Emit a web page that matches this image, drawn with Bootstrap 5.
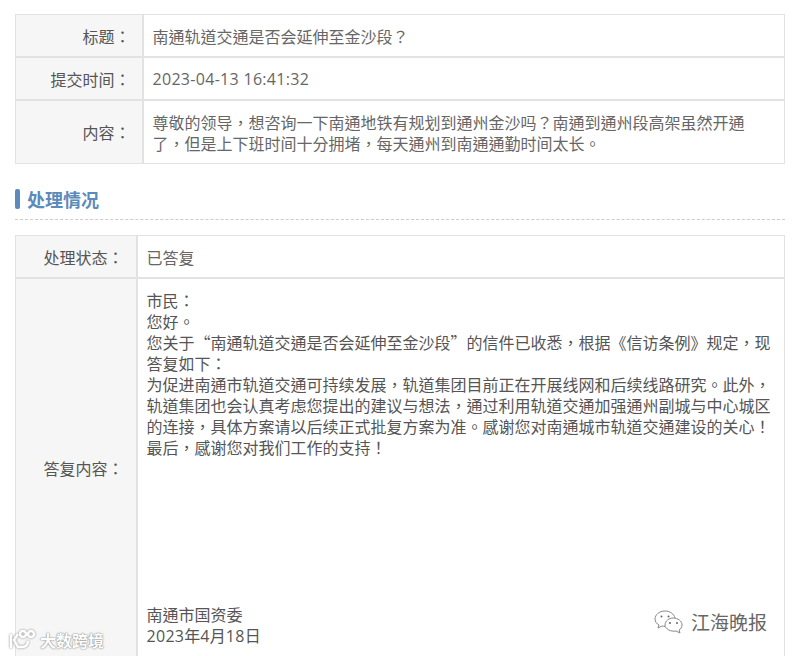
<!DOCTYPE html>
<html lang="zh-Hant">
<head>
<meta charset="utf-8">
<title>处理情况</title>
<link rel="stylesheet" href="https://cdn.jsdelivr.net/npm/bootstrap@5.3.0/dist/css/bootstrap.min.css">
<style>
html,body{height:656px;overflow:hidden;background:#fff}
body{font-family:"Noto Sans CJK TC","Noto Sans CJK SC",sans-serif;font-size:16px;line-height:21px;color:#666;position:relative}
.sheet{padding:14px 7px 0 15px}
.num{font-family:"Open Sans",sans-serif;letter-spacing:.3px}
.info{table-layout:fixed;width:770px;margin:0;border-collapse:collapse;--bs-table-bg:transparent}
.info th,.info td{border:2px solid #e2e2e2;font-weight:400;vertical-align:middle;line-height:21px;padding:0 9px;color:#666}
.info tr:first-child>*{border-top-width:1px}
.info tr:last-child>*{border-bottom-width:1px}
.info th{background:#f6f6f6;text-align:right;color:#555;padding:0 11px 0 0;border-left-width:1px}
.info td{border-right-width:1px;background:#fff}
.one th{width:127px}
.two th{width:121px;padding-right:12px}
.rowfirst{height:42px}
.rowh{height:43px}
.contenth{height:64px}
.info .rowfirst>*,.info .rowh>*,.info .contenth>*{padding-top:2px}
.replyh{height:381px}
.two td.reply{vertical-align:top;padding-top:11px;color:#555}
.gapline{height:146px}
.heading{margin:25px 0 15px;padding-bottom:10px;border-bottom:1px dashed #ccc;display:flex;align-items:center;gap:7px}
.bar-mark{width:5px;height:20px;background:#5b8abb;border-radius:2px;flex:none}
.heading h2{font-size:18px;line-height:20px;font-weight:700;margin:0;color:#5b8abb;font-family:"Noto Sans CJK SC",sans-serif}
.mark-left{position:absolute;left:8px;top:629px;display:flex;align-items:center;gap:4px;color:#fff;font-size:16px;line-height:20px;font-weight:700;text-shadow:0 0 2px #888,0 0 1px #888}
.mark-left svg{filter:drop-shadow(0 0 1px #888)}
.mark-right{position:absolute;left:654px;top:608px;display:flex;align-items:center;gap:7px;color:#666;font-size:19px;line-height:26px;font-family:"Noto Sans CJK SC",sans-serif;text-shadow:0 0 2px #fff}
</style>
</head>
<body>
<div class="sheet">
  <table class="table info one">
    <tbody>
      <tr class="rowfirst"><th>标题：</th><td>南通轨道交通是否会延伸至金沙段？</td></tr>
      <tr class="rowh"><th>提交时间：</th><td><span class="num">2023-04-13 16:41:32</span></td></tr>
      <tr class="contenth"><th>内容：</th><td>尊敬的领导，想咨询一下南通地铁有规划到通州金沙吗？南通到通州段高架虽然开通了，但是上下班时间十分拥堵，每天通州到南通通勤时间太长。</td></tr>
    </tbody>
  </table>
  <div class="heading"><span class="bar-mark"></span><h2>处理情况</h2></div>
  <table class="table info two">
    <tbody>
      <tr class="rowfirst"><th>处理状态：</th><td>已答复</td></tr>
      <tr class="replyh"><th>答复内容：</th><td class="reply">
        <div>市民：</div>
        <div>您好。</div>
        <div>您关于“南通轨道交通是否会延伸至金沙段”的信件已收悉，根据《信访条例》规定，现答复如下：</div>
        <div>为促进南通市轨道交通可持续发展，轨道集团目前正在开展线网和后续线路研究。此外，轨道集团也会认真考虑您提出的建议与想法，通过利用轨道交通加强通州副城与中心城区的连接，具体方案请以后续正式批复方案为准。感谢您对南通城市轨道交通建设的关心！</div>
        <div>最后，感谢您对我们工作的支持！</div>
        <div class="gapline"></div>
        <div>南通市国资委</div>
        <div><span class="num">2023</span>年<span class="num">4</span>月<span class="num">18</span>日</div>
      </td></tr>
    </tbody>
  </table>
</div>
<div class="mark-left">
  <svg width="28" height="22" viewBox="0 0 28 22" fill="none" stroke="#fff" stroke-width="2.500"><path d="M3 5v14M10 5 6 11l4 7h4c4 0 6-3 6-6"/><circle cx="15" cy="5" r="3"/><circle cx="23" cy="5" r="3"/></svg>
  <span>大数跨境</span>
</div>
<div class="mark-right">
  <svg width="30" height="28" viewBox="0 0 30 28" fill="none" stroke="#888" stroke-width="1"><path d="M11 3C5 3 1 7 1 11c0 3 2 5 4 6l-1 3 4-2c1 0 2 .5 3 .5"/><path d="M11 3c5 0 9 3 10 7"/><circle cx="7.500" cy="8.500" r="1" fill="#666" stroke="none"/><circle cx="14.500" cy="8.500" r="1" fill="#666" stroke="none"/><path d="M19 10c5 0 9 3 9 7 0 2-1 4-3 5l1 3-4-2c-5 1-11-2-11-6s4-7 8-7z"/><circle cx="16" cy="15" r="1" fill="#666" stroke="none"/><circle cx="23" cy="15" r="1" fill="#666" stroke="none"/></svg>
  <span>江海晚报</span>
</div>
</body>
</html>
